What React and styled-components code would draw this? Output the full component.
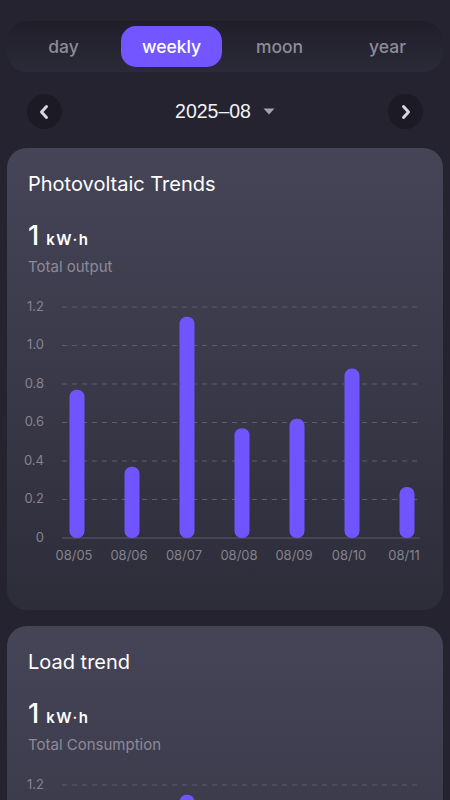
import React, { useState } from "react";
import styled, { createGlobalStyle } from "styled-components";

const GlobalStyle = createGlobalStyle`
  body {
    margin: 0;
    background: #24232f;
    font-family: Inter, "Noto Sans", "Liberation Sans", sans-serif;
  }
`;

const tabs = ["day", "weekly", "moon", "year"];
const labels = ["08/05", "08/06", "08/07", "08/08", "08/09", "08/10", "08/11"];
const values = [0.77, 0.37, 1.15, 0.57, 0.62, 0.88, 0.265];
const ticks = [1.2, 1.0, 0.8, 0.6, 0.4, 0.2, 0];

const App = () => {
  const [active, setActive] = useState("weekly");
  return (
    <Page>
      <GlobalStyle />
      <TabBar>
        {tabs.map((t) => (
          <Tab key={t} $active={t === active} onClick={() => setActive(t)}>
            {t}
          </Tab>
        ))}
      </TabBar>
      <NavRow>
        <RoundButton aria-label="previous">
          <Chevron dir="left" />
        </RoundButton>
        <DatePicker>
          <span>2025–08</span>
          <Caret />
        </DatePicker>
        <RoundButton aria-label="next">
          <Chevron dir="right" />
        </RoundButton>
      </NavRow>
      <TrendCard title="Photovoltaic Trends" caption="Total output" />
      <TrendCard title="Load trend" caption="Total Consumption" />
    </Page>
  );
};

const Chevron = ({ dir }) => (
  <svg width="12" height="16" viewBox="0 0 12 16">
    <path
      d={dir === "left" ? "M8.5 2.5 L3.5 8 L8.5 13.5" : "M3.5 2.5 L8.5 8 L3.5 13.5"}
      fill="none"
      stroke="#d6d6dc"
      strokeWidth="3"
      strokeLinecap="round"
      strokeLinejoin="round"
    />
  </svg>
);

const Caret = () => (
  <svg width="12" height="7" viewBox="0 0 12 7">
    <path d="M0.5 0.5 H11.5 L6 6.5 Z" fill="#a3a3ab" />
  </svg>
);

const TrendCard = ({ title, caption }) => (
  <Card>
    <CardTitle>{title}</CardTitle>
    <ValueRow>
      <BigValue>1</BigValue>
      <Unit>kW·h</Unit>
    </ValueRow>
    <Caption>{caption}</Caption>
    <BarChart />
  </Card>
);

// chart coordinates: svg x = page x - 28
const BASE = 243;
const UNIT = 192.5;

const BarChart = () => (
  <ChartSvg width="396" height="275" viewBox="0 0 396 275">
    {ticks.map((v) => {
      const y = BASE - v * UNIT;
      return (
        <g key={v}>
          <text x="16" y={y} textAnchor="end" dominantBaseline="middle" className="axis">
            {v === 0 ? "0" : v.toFixed(1)}
          </text>
          {v === 0 ? (
            <line x1="34" x2="392" y1={y} y2={y} stroke="#5c5b6c" strokeWidth="1" />
          ) : (
            <line
              x1="34"
              x2="392"
              y1={y}
              y2={y}
              stroke="#5d5c6d"
              strokeWidth="1"
              strokeDasharray="5 5"
            />
          )}
        </g>
      );
    })}
    {values.map((v, i) => {
      const cx = 49 + i * 55;
      const h = v * UNIT;
      return (
        <rect
          key={i}
          x={cx - 7.5}
          y={BASE - h}
          width="15"
          height={h}
          rx="7"
          fill="#7055ff"
        />
      );
    })}
    {labels.map((l, i) => (
      <text key={l} x={46 + i * 55} y="265" textAnchor="middle" className="axis">
        {l}
      </text>
    ))}
  </ChartSvg>
);

const Page = styled.div`
  padding: 21px 7px 20px;
  display: flex;
  flex-direction: column;
`;

const TabBar = styled.div`
  display: flex;
  gap: 7px;
  padding: 5px 5px 5px 6px;
  border-radius: 20px;
  background: linear-gradient(180deg, #1f1e29 0%, #2b2a38 100%);
`;

const Tab = styled.button`
  flex: 1;
  height: 41px;
  border: none;
  border-radius: 15px;
  background: ${(p) => (p.$active ? "#7356ff" : "transparent")};
  color: ${(p) => (p.$active ? "#ffffff" : "#8d8c97")};
  font-family: inherit;
  font-size: 17.5px;
  font-weight: 500;
  cursor: pointer;
  padding: 0;
`;

const NavRow = styled.div`
  display: flex;
  align-items: center;
  justify-content: space-between;
  padding: 0 19.5px;
  margin-top: 22px;
`;

const RoundButton = styled.button`
  width: 35px;
  height: 35px;
  border-radius: 50%;
  border: none;
  background: #1c1b25;
  display: flex;
  align-items: center;
  justify-content: center;
  padding: 0;
  cursor: pointer;
`;

const DatePicker = styled.div`
  display: flex;
  align-items: center;
  gap: 12px;
  color: #f2f2f6;
  font-size: 19.5px;
  font-family: "Liberation Sans", Arial, sans-serif;
`;

const Card = styled.div`
  margin-top: 19px;
  border-radius: 20px;
  background: linear-gradient(180deg, #464558 0%, #3a3949 50%, #2d2c39 100%);
  padding: 23px 21px 40px;
  display: flex;
  flex-direction: column;

  & + & {
    margin-top: 16px;
  }
`;

const CardTitle = styled.h2`
  margin: 0;
  font-size: 20px;
  line-height: 26px;
  font-weight: 400;
  color: #ffffff;
`;

const ValueRow = styled.div`
  display: flex;
  align-items: baseline;
  gap: 7px;
  margin-top: 24px;
  height: 30px;
  color: #ffffff;
`;

const BigValue = styled.span`
  font-size: 27px;
  line-height: 30px;
  font-weight: 500;
`;

const Unit = styled.span`
  font-size: 15px;
  font-weight: 600;
  letter-spacing: 1.5px;
`;

const Caption = styled.div`
  margin-top: 6px;
  font-size: 15px;
  line-height: 20px;
  color: #8c8b97;
`;

const ChartSvg = styled.svg`
  margin-top: 18px;
  overflow: visible;

  .axis {
    font-size: 13px;
    fill: #84838f;
    font-family: Inter, "Noto Sans", sans-serif;
  }
`;

export default App;
